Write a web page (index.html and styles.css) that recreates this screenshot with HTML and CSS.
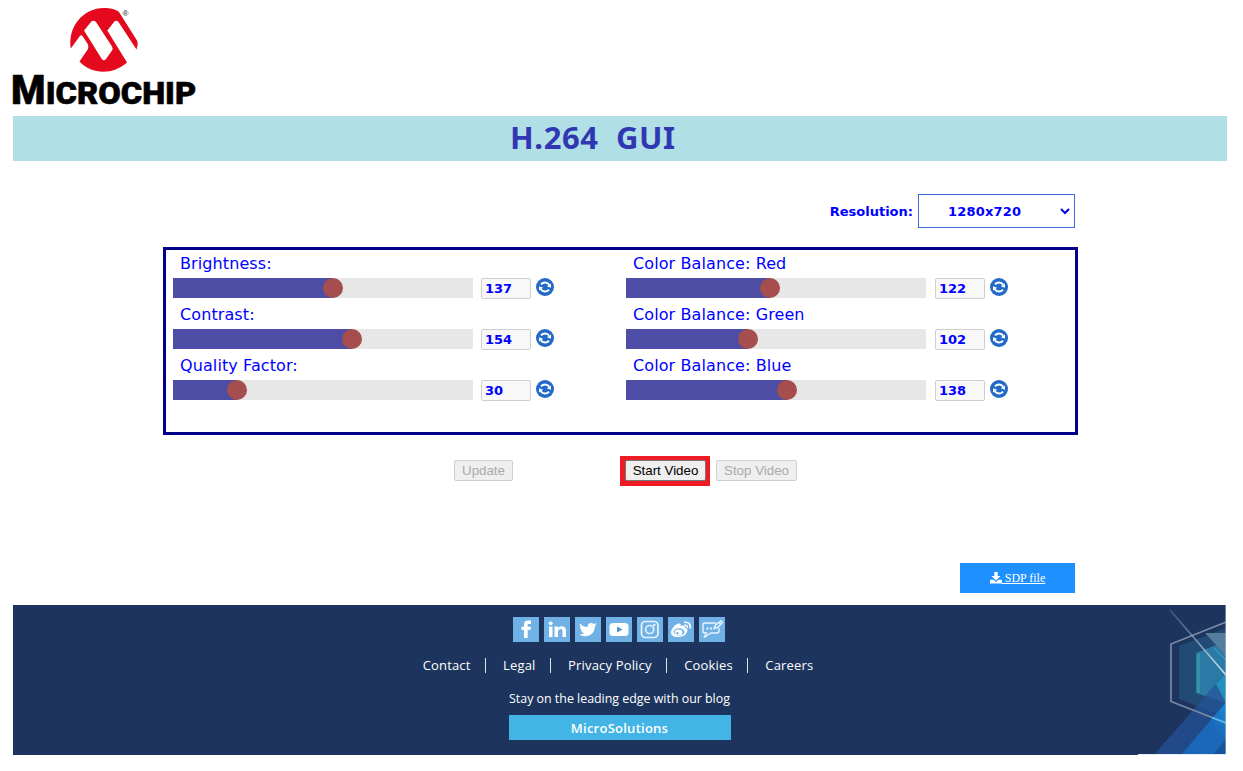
FILE: index.html
```html
<!DOCTYPE html>
<html lang="en">
<head>
<meta charset="utf-8">
<title>H.264 GUI</title>
<link rel="stylesheet" href="styles.css">
</head>
<body>
<svg class="defs" aria-hidden="true">
  <symbol id="refresh" viewBox="0 0 18 18">
    <circle cx="9" cy="9" r="9" fill="#2369c8"/>
    <g fill="none" stroke="#fff" stroke-width="1.900"><path d="M5 6.400C7 3.800 11.300 3.700 13.200 6.700"/><path d="M13 11.600C11 14.200 6.700 14.300 4.800 11.300"/></g>
    <path d="M15 5.500v4.300L10.800 8.300zM3 12.500V8.200L7.200 9.700z" fill="#fff"/>
  </symbol>
</svg>
<header class="brand">
  <svg class="logo" viewBox="0 0 200 112" role="img" aria-label="Microchip">
    <path fill="#e5091d" fill-rule="evenodd" d="M70.800 48.500C67.500 27 83 8 104 8C110 8 116 9.300 119 12L137.300 41Q138.500 45 136.500 49.500L118.500 22Q116 19.500 114 22L107.300 30.500L127 62.500C113 75 92 75 79.500 61.500L88 49Q88.700 47 88 44.500L82.500 36Q81 34.500 79.500 36.500zM84 30.500L101.800 59Q104 61.500 106 59L112 50.500Q113.200 48.500 112 46.500L96 22Q93.500 19.500 91.200 21.800z"/>
    <text class="registered" x="122.500" y="16">®</text>
    <text class="wordmark" x="11" y="103.500" font-size="41" textLength="34.500" lengthAdjust="spacingAndGlyphs">M</text>
    <text class="wordmark" x="45.700" y="103.500" font-size="32" textLength="150.500" lengthAdjust="spacingAndGlyphs">ICROCHIP</text>
  </svg>
</header>
<h1 class="banner">H.264&nbsp; GUI</h1>
<main class="content">
  <div class="resolution">
    <label for="res">Resolution:</label>
    <div class="select" id="res"><span>1280x720</span><svg width="10" height="7" viewBox="0 0 10 7"><path d="M1 1l4 4 4-4" fill="none" stroke="#0000e0" stroke-width="2"/></svg></div>
  </div>
  <section class="panel">
    <div class="column">
      <div class="control"><div class="name">Brightness:</div><div class="row"><div class="track"><div class="fill" style="width:160px"></div><i class="thumb"></i></div><div class="value">137</div><svg class="refresh"><use href="#refresh"/></svg></div></div>
      <div class="control"><div class="name">Contrast:</div><div class="row"><div class="track"><div class="fill" style="width:179px"></div><i class="thumb"></i></div><div class="value">154</div><svg class="refresh"><use href="#refresh"/></svg></div></div>
      <div class="control"><div class="name">Quality Factor:</div><div class="row"><div class="track"><div class="fill" style="width:64px"></div><i class="thumb"></i></div><div class="value">30</div><svg class="refresh"><use href="#refresh"/></svg></div></div>
    </div>
    <div class="column right">
      <div class="control"><div class="name">Color Balance: Red</div><div class="row"><div class="track"><div class="fill" style="width:144px"></div><i class="thumb"></i></div><div class="value">122</div><svg class="refresh"><use href="#refresh"/></svg></div></div>
      <div class="control"><div class="name">Color Balance: Green</div><div class="row"><div class="track"><div class="fill" style="width:122px"></div><i class="thumb"></i></div><div class="value">102</div><svg class="refresh"><use href="#refresh"/></svg></div></div>
      <div class="control"><div class="name">Color Balance: Blue</div><div class="row"><div class="track"><div class="fill" style="width:161px"></div><i class="thumb"></i></div><div class="value">138</div><svg class="refresh"><use href="#refresh"/></svg></div></div>
    </div>
  </section>
  <div class="actions">
    <button class="update" disabled>Update</button>
    <div class="highlight"><button class="start">Start Video</button></div>
    <button class="stop" disabled>Stop Video</button>
  </div>
  <a class="sdp"><svg width="12" height="12" viewBox="0 0 12 12"><path d="M4.300 0h3.400v4H10.500L6 8.500 1.500 4H4.300zM0 7.800H3.500L6 10 8.500 7.800H12V11.500H0z" fill="#fff"/></svg><span>&nbsp;SDP file</span></a>
</main>
<footer class="footer">
  <svg class="art" viewBox="0 0 90 150">
    <defs>
      <pattern id="hatch" width="2.500" height="2.500" patternUnits="userSpaceOnUse" patternTransform="rotate(43)"><rect width="1.250" height="2.500" fill="#2f78c0" opacity=".28"/></pattern>
      <linearGradient id="beam" x1="1" y1="0" x2="0" y2="1"><stop offset="0" stop-color="#168ed8"/><stop offset=".4" stop-color="#1764b8"/></linearGradient>
      <linearGradient id="ray" x1="0" y1="0" x2="1" y2="1"><stop offset="0" stop-color="#8c9bb5" stop-opacity=".3"/><stop offset="1" stop-color="#c8e4ee"/></linearGradient>
    </defs>
    <path d="M43 41L90 23V112L43 94z" fill="#214a75"/>
    <path d="M60 48L90 36V98L60 88z" fill="#2b7aa5"/>
    <path d="M62.500 49V88" stroke="#378fac" stroke-width="3"/>
    <path d="M69 28H90V51z" fill="#557d9d"/>
    <path d="M78 43L90 55" stroke="#4aa9c2"/>
    <path d="M19 149L89 68H90V106L49 149z" fill="#204a90" opacity=".65"/>
    <path d="M90 68V98L80 79z" fill="#20a4c4" opacity=".8"/>
    <path d="M46 149L90 97V149z" fill="url(#beam)"/>
    <path d="M19 149L89 68H90V149z" fill="url(#hatch)"/>
    <path d="M78 149L90 134V149z" fill="#14549a"/>
    <path d="M90 17L35 39V96.500L90 118" fill="none" stroke="#7889a6" stroke-width="1.700"/>
    <path d="M76 112.500L90 118" stroke="#58b8e8" stroke-width="1.700"/>
    <path d="M34 5L90 70" stroke="url(#ray)" stroke-width="1.700"/>
    <path d="M2 149.500H90" stroke="#e6eaf3"/><path d="M89.700 0V150" stroke="#c5cede" stroke-width=".6"/>
  </svg>
  <div class="social">
    <svg viewBox="0 0 26 25"><path d="M11 21v-8H8.500V9.700H11V7.500C11 4.500 12.700 3.500 15 3.500h3V7h-2c-1 0-1.300.5-1.300 1.300v1.400H18l-.5 3.300h-2.800v8z" fill="#fff"/></svg>
    <svg viewBox="0 0 26 25"><path d="M5 9.500h3.500V20H5zM10.500 9.500H14V11c2-3 8-2.500 8 2.500V20h-3.500v-5.500c0-3.500-4.500-3-4.500 0V20h-3.500z" fill="#fff"/><circle cx="6.700" cy="6.300" r="1.900" fill="#fff"/></svg>
    <svg viewBox="0 0 26 25"><path d="M5 6.500c2 2.300 4.500 3.500 7.500 3.700C12 6.500 16 4.500 18.800 7L21.500 6l-1.400 2 1.600-.4-1.900 2C20 16 15 19.500 10 19.200c-2 0-4-.6-5.500-1.700 2 .1 3.500-.4 4.800-1.400-1.600-.2-2.800-1-3.200-2.500h1.500C5.800 13 5 11.500 5 9.800l1.500.4C4.800 9 4.300 7.500 5 6.500z" fill="#fff"/></svg>
    <svg viewBox="0 0 26 25"><rect x="3.500" y="6" width="19" height="13" rx="3.500" fill="#fff"/><path d="M11 9.500v6l5.500-3z" fill="#4b94cb"/></svg>
    <svg viewBox="0 0 26 25" fill="none" stroke="#e4f2fd" stroke-width="1.700"><rect x="4.500" y="4.500" width="16.500" height="16" rx="4"/><circle cx="12.700" cy="12.500" r="4"/><circle cx="17.200" cy="8" r=".5"/></svg>
    <svg viewBox="0 0 26 25"><path d="M3 15.500C3 11 10 4.700 12.400 7c.8.800.3 2 .3 2 3-1.200 5-.5 4.500 2 2 .6 2.600 1.800 2 3.500C17.500 21.500 3 22 3 15.500z" fill="#fff"/><ellipse cx="11" cy="15" rx="5.500" ry="3.700" fill="#70b2e5"/><ellipse cx="10.500" cy="15.500" rx="3.900" ry="3" fill="#fff"/><circle cx="9.300" cy="16.200" r="1.200" fill="#70b2e5"/><path d="M16.500 8.300c2-.5 3.300.8 2.800 2.700M16 5.500c4.500-1 7.200 2 6 6" fill="none" stroke="#fff" stroke-width="1.500"/></svg>
    <svg viewBox="0 0 26 25" fill="none" stroke="#e7f4ff" stroke-width="1.400"><path d="M17 6H6Q4 6 4 8v6q0 2 2 2h1.500L5 20.500l7-4.500h6q2 0 2-2v-3"/><path d="M15.500 11l1-3L22 4l1.500 1.500-5 5zM20 5.500l2 2"/><path d="M7.500 11.500h2m1.500 0h2m1.500 0h1" stroke-width="2"/></svg>
  </div>
  <nav class="links"><span>Contact</span><i></i><span>Legal</span><i></i><span>Privacy Policy</span><i></i><span>Cookies</span><i></i><span>Careers</span></nav>
  <p class="tagline">Stay on the leading edge with our blog</p>
  <a class="blog">MicroSolutions</a>
</footer>
</body>
</html>
```
FILE: styles.css
```css
* { box-sizing: border-box; }
body { margin: 0; width: 1243px; height: 771px; overflow: hidden; background: #fff; font-family: "DejaVu Sans", sans-serif; color: #00f; }
.defs { display: none; }
.brand { height: 116px; }
.logo { display: block; width: 200px; height: 112px; }
.wordmark { font-family: Roboto, sans-serif; font-weight: 900; line-height: 1; fill: #000; stroke: #000; stroke-width: .6px; }
.registered { font: 8px "Liberation Sans", sans-serif; fill: #222; }
.banner { margin: 0 16px 0 13px; height: 45px; padding-left: 497px; background: #b0e0e6; color: #3137b2; font: bold 31px/43px "Noto Sans", sans-serif; letter-spacing: .6px; white-space: nowrap; }
.content { width: 915px; height: 444px; margin-left: 163px; padding-top: 33px; }
.resolution { display: flex; align-items: center; justify-content: flex-end; gap: 5px; margin-right: 3px; font-size: 13px; font-weight: bold; }
.select { display: flex; align-items: center; justify-content: space-between; width: 157px; height: 34px; padding: 0 4px 0 29px; border: 1px solid #4169e1; letter-spacing: .2px; }
.panel { display: grid; grid-template-columns: 453px 1fr; height: 188px; margin-top: 19px; padding-left: 7px; border: 3px solid #00008b; }
.control { height: 51px; }
.name { height: 28px; padding-left: 7px; font-size: 16px; line-height: 27px; letter-spacing: .1px; }
.row { display: flex; height: 23px; }
.track { display: flex; width: 300px; height: 20px; background: #e7e7e7; }
.fill { height: 20px; background: #4d4da5; }
.thumb { width: 20px; height: 20px; margin-left: -10px; border-radius: 50%; background: #a64d4d; }
.value { width: 50px; height: 21px; margin-left: 8px; padding-left: 3px; border: 1px solid #cfcfcf; border-radius: 2px; background: #f8f8f8; font-size: 13px; font-weight: bold; line-height: 20px; }
.right .value { margin-left: 9px; }
.refresh { width: 18px; height: 18px; margin-left: 5px; }
.actions { display: flex; align-items: flex-start; height: 30px; margin: 21px 0 0 291px; }
button { height: 21px; margin-top: 4px; padding: 0; border: 1px solid #cfcfcf; border-radius: 2px; background: #efefef; color: #aaa; font: 13.333px/18px "Liberation Sans", sans-serif; }
.update { width: 59px; margin-right: 107px; }
.highlight { display: flex; width: 90px; height: 30px; padding: 4px 4px 4px 5px; background: #ed1c24; }
.start { width: 81px; margin-top: 0; border-color: #777; color: #000; }
.stop { width: 81px; margin-left: 6px; }
.sdp { display: flex; align-items: center; justify-content: center; width: 115px; height: 30px; margin: 77px 0 0 797px; background: #1e90ff; color: #fff; font: 12px "Liberation Serif", serif; text-decoration: underline; }
.footer { display: flex; position: relative; flex-direction: column; align-items: center; width: 1213px; height: 150px; margin-left: 13px; padding: 12px 0 0; background: #1d355e; color: #fff; font-family: "Open Sans", sans-serif; }
.art { position: absolute; right: 0; top: 0; width: 90px; height: 150px; }
.social { display: flex; gap: 5px; margin-left: -2px; }
.social svg { width: 26px; height: 25px; background: #70b2e5; }
.links { display: flex; align-items: center; height: 20px; margin: 13px 0 0 -3px; font-size: 13px; font-weight: 500; line-height: 20px; letter-spacing: .17px; }
.links i { width: 1px; height: 15px; margin: 0 17px 0 14.500px; background: #e1e5df; }
.tagline { margin: 14px 0 0; font-size: 12.400px; font-weight: 500; line-height: 20px; }
.blog { width: 222px; height: 25px; margin-top: 6px; background: #42b4e6; font-size: 13px; font-weight: 600; line-height: 26px; letter-spacing: .25px; text-align: center; }
```
